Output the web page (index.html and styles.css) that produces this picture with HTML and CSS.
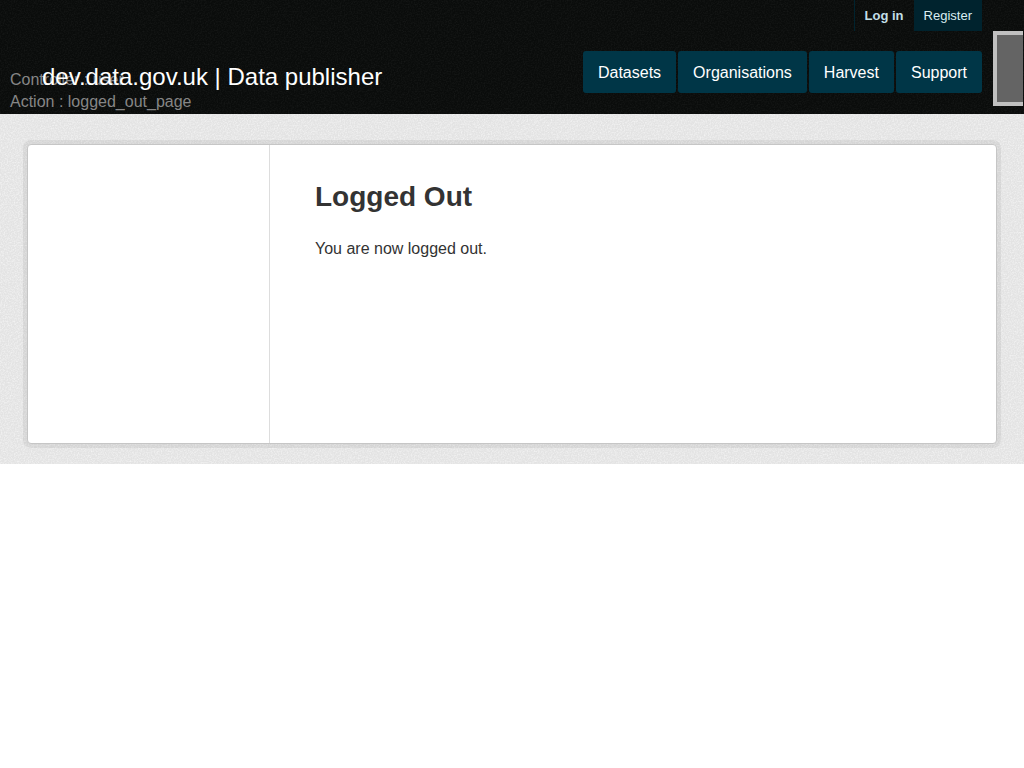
FILE: index.html
```html
<!DOCTYPE html>
<html lang="en">
<head>
<meta charset="utf-8">
<meta name="viewport" content="width=device-width, initial-scale=1">
<title>Logged Out - Data publisher</title>
<link rel="stylesheet" href="styles.css">
</head>
<body>
<header class="masthead">
  <svg class="grain grain-dark" aria-hidden="true">
    <filter id="grain-light-specks"><feTurbulence type="fractalNoise" baseFrequency="0.7" numOctaves="2"/><feColorMatrix values="0 0 0 0 1  0 0 0 0 1  0 0 0 0 1  1.6 0 0 0 -0.6"/></filter>
    <rect width="100%" height="100%" filter="url(#grain-light-specks)"/>
  </svg>
  <div class="debug">
    <div>Controller : user</div>
    <div>Action : logged_out_page</div>
  </div>
  <div class="debug-panel"></div>
  <nav class="account" aria-label="Account">
    <a class="login" href="#">Log in</a>
    <a class="register" href="#">Register</a>
  </nav>
  <div class="masthead-row">
    <a class="site-title" href="#">dev.data.gov.uk | Data publisher</a>
    <nav class="main-nav" aria-label="Main">
      <a href="#">Datasets</a>
      <a href="#">Organisations</a>
      <a href="#">Harvest</a>
      <a href="#">Support</a>
    </nav>
  </div>
</header>
<main class="main">
  <svg class="grain grain-pale" aria-hidden="true"><rect width="100%" height="100%" filter="url(#grain-light-specks)"/></svg>
  <div class="card">
    <aside class="sidebar"></aside>
    <section class="content">
      <h1>Logged Out</h1>
      <p>You are now logged out.</p>
    </section>
  </div>
</main>
</body>
</html>
```

FILE: styles.css
```css
* { box-sizing: border-box; }

body {
  margin: 0;
  background: #fff;
  color: #333;
  font: 16px/22px "Liberation Sans", Arial, sans-serif;
}

a { text-decoration: none; }

.masthead {
  position: relative;
  padding: 0 42px 21px;
  background: #0a0c0b;
  overflow: hidden;
}

.grain {
  position: absolute;
  inset: 0;
  width: 100%;
  height: 100%;
  pointer-events: none;
}

.grain-dark { opacity: 0.06; }
.grain-pale { opacity: 0.7; }

.debug {
  position: absolute;
  left: 10px;
  bottom: 1px;
  color: #868686;
}

.debug-panel {
  position: absolute;
  top: 31px;
  right: 1px;
  width: 30px;
  height: 75px;
  border: 4px solid #c0c0c0;
  border-right: 0;
  background: #646464;
}

.account {
  position: relative;
  display: flex;
  justify-content: flex-end;
  font-size: 13px;
  line-height: 31px;
}

.account a { padding: 0 10px; }

.login {
  border-left: 1px solid #00232e;
  color: #c3dfe6;
  font-weight: bold;
}

.register {
  background: #00232e;
  color: #d9edf2;
}

.masthead-row {
  position: relative;
  display: flex;
  justify-content: space-between;
  align-items: flex-start;
  margin-top: 20px;
}

.site-title {
  padding-top: 10px;
  color: #fff;
  font-size: 24px;
  line-height: 32px;
}

.main-nav {
  display: flex;
  gap: 2px;
}

.main-nav a {
  padding: 11px 15px 9px;
  border-radius: 3px;
  background: #003647;
  color: #fff;
}

.main {
  position: relative;
  padding: 30px 27px 20px;
  background: #e3e3e3;
}

.card {
  position: relative;
  display: flex;
  min-height: 300px;
  border: 1px solid #c6c6c6;
  border-radius: 4px;
  background: #fff;
  box-shadow: 0 0 0 4px rgba(0, 0, 0, 0.06);
}

.sidebar {
  flex: 0 0 25%;
  border-right: 1px solid #ddd;
}

.content {
  flex: 1;
  padding: 32px 45px;
}

h1 {
  margin: 0 0 21px;
  font-size: 28px;
  line-height: 40px;
}

p { margin: 0; }
```
